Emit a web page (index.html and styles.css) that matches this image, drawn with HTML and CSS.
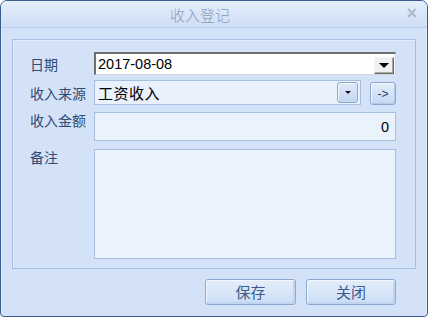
FILE: index.html
```html
<!DOCTYPE html>
<html lang="zh">
<head>
<meta charset="utf-8">
<title>收入登记</title>
<link rel="stylesheet" href="styles.css">
</head>
<body>
<div class="window">
  <div class="titlebar">
    <span class="title">收入登记</span>
    <span class="close">×</span>
  </div>
  <div class="content">
    <div class="group">
      <div class="row row-date">
        <div class="label label-mid">日期</div>
        <div class="datefield">
          <span class="value">2017-08-08</span>
          <span class="dd-classic"><span class="tri-big"></span></span>
        </div>
      </div>
      <div class="row row-source">
        <div class="label label-mid">收入来源</div>
        <div class="fieldline">
          <div class="combo">
            <span class="value cjk">工资收入</span>
            <span class="dd-blue"><span class="tri-small"></span></span>
          </div>
          <button class="arrowbtn">-&gt;</button>
        </div>
      </div>
      <div class="row row-amount">
        <div class="label label-top">收入金额</div>
        <div class="amount"><span class="value">0</span></div>
      </div>
      <div class="row row-memo">
        <div class="label label-top">备注</div>
        <div class="memo"></div>
      </div>
    </div>
    <div class="buttons">
      <button class="btn">保存</button>
      <button class="btn">关闭</button>
    </div>
  </div>
</div>
</body>
</html>
```

FILE: styles.css
```css
html, body {
  margin: 0;
  padding: 0;
  width: 428px;
  height: 318px;
  overflow: hidden;
  background: #ffffff;
}

.window {
  box-sizing: border-box;
  width: 428px;
  height: 317px;
  border: 1px solid #3b5c8e;
  border-radius: 7px 7px 4px 4px;
  background: #d3e2f6;
  box-shadow: inset 1px 0 0 #e6eefa, inset -1px 0 0 #e6eefa;
  overflow: hidden;
  font-family: "Noto Sans CJK SC", "Noto Sans", sans-serif;
}

.titlebar {
  height: 26px;
  border-bottom: 1px solid #b9d0ef;
  background: linear-gradient(#e6effb 0%, #d9e6f8 50%, #cedff5 100%);
  display: flex;
  align-items: center;
  justify-content: center;
  position: relative;
}

.title {
  font-size: 15px;
  line-height: 18px;
  font-weight: 300;
  color: #8a9bb5;
  margin-left: -28px;
  margin-top: 2px;
}

.close {
  position: absolute;
  right: 9px;
  top: 3px;
  font-family: "DejaVu Sans", sans-serif;
  font-size: 15px;
  font-weight: bold;
  color: #a7b6cd;
}

.content {
  padding: 11px 11px 0 11px;
}

.group {
  box-sizing: border-box;
  width: 404px;
  height: 230px;
  border: 1px solid #a6bfe0;
  box-shadow: inset 1px 1px 0 #e4edfa;
  padding: 12px 19px 0 17px;
  display: flex;
  flex-direction: column;
}

.row {
  display: flex;
}

.row-source { margin-top: 5px; }
.row-amount { margin-top: 7px; }
.row-memo { margin-top: 8px; }

.label {
  width: 64px;
  flex: none;
  font-size: 14px;
  line-height: 16px;
  color: #2d4a79;
  white-space: nowrap;
}

.label-mid { align-self: center; }
.label-top { padding-top: 0; }

.value {
  font-family: "Liberation Sans", Arial, sans-serif;
  font-size: 14.5px;
  color: #000000;
}

.value.cjk {
  font-family: "Noto Sans CJK SC", sans-serif;
  font-size: 15px;
  letter-spacing: 0.5px;
}

.datefield {
  box-sizing: border-box;
  width: 302px;
  height: 23px;
  background: #ffffff;
  border-style: solid;
  border-width: 2px 1px 1px 2px;
  border-color: #6e6e6e #d6d6d6 #d6d6d6 #6e6e6e;
  display: flex;
  align-items: center;
  padding-left: 2px;
  padding-right: 1px;
}

.datefield .value {
  flex: 1;
  line-height: 18px;
}

.dd-classic {
  box-sizing: border-box;
  width: 20px;
  height: 17px;
  margin-top: 2px;
  background: #f0f0f0;
  border-style: solid;
  border-width: 1px;
  border-color: #f6f6f6 #6a6a6a #6a6a6a #f6f6f6;
  box-shadow: inset -1px -1px 0 #a8a8a8;
  display: flex;
  align-items: center;
  justify-content: center;
}

.tri-big {
  width: 0;
  height: 0;
  border-left: 5px solid transparent;
  border-right: 5px solid transparent;
  border-top: 5px solid #000000;
  margin-top: 1px;
}

.fieldline {
  display: flex;
  gap: 9px;
  width: 302px;
}

.combo {
  box-sizing: border-box;
  width: 267px;
  height: 25px;
  background: #e9f1fc;
  border: 1px solid #a7c0e2;
  display: flex;
  align-items: center;
  padding: 0 2px 0 3px;
}

.combo .value {
  flex: 1;
  line-height: 20px;
}

.dd-blue {
  box-sizing: border-box;
  width: 21px;
  height: 21px;
  border: 1px solid #8ea9cf;
  border-radius: 3px;
  background: linear-gradient(#dfe9f8 0%, #cfdff4 55%, #c3d6f1 100%);
  box-shadow: inset 1px 1px 0 #f2f6fd;
  display: flex;
  align-items: center;
  justify-content: center;
}

.tri-small {
  width: 0;
  height: 0;
  border-left: 3px solid transparent;
  border-right: 3px solid transparent;
  border-top: 3px solid #111111;
}

.arrowbtn {
  box-sizing: border-box;
  width: 26px;
  height: 23px;
  margin-top: 2px;
  padding: 0;
  border: 1px solid #8ea9cf;
  border-radius: 3px;
  background: linear-gradient(#e3ecf9 0%, #d3e2f6 55%, #c4d7f1 100%);
  box-shadow: inset 1px 1px 0 #f4f8fd, inset -1px -1px 0 #b3c9ea;
  font-family: "Liberation Sans", Arial, sans-serif;
  font-size: 12px;
  color: #1f3a66;
  line-height: 20px;
}

.amount {
  box-sizing: border-box;
  width: 302px;
  height: 29px;
  background: #eaf2fc;
  border: 1px solid #a7c0e2;
  display: flex;
  justify-content: flex-end;
  padding: 5px 6px 0 0;
}

.amount .value {
  line-height: 18px;
}

.memo {
  box-sizing: border-box;
  width: 302px;
  height: 110px;
  background: #eaf2fc;
  border: 1px solid #a7c0e2;
}

.buttons {
  display: flex;
  justify-content: flex-end;
  gap: 10px;
  margin-top: 10px;
  padding-right: 20px;
}

.btn {
  box-sizing: border-box;
  width: 91px;
  height: 26px;
  padding: 0;
  border: 1px solid #8ea9cf;
  border-radius: 3px;
  background: linear-gradient(#e4edfa 0%, #d8e6f8 50%, #cbdcf4 100%);
  box-shadow: inset 1px 1px 0 #f4f8fe, inset -2px -2px 0 #c2d5f0;
  font-family: "Noto Sans CJK SC", sans-serif;
  font-size: 15px;
  line-height: 22px;
  color: #3a5a8c;
}

.btn + .btn {
  width: 90px;
}
```
